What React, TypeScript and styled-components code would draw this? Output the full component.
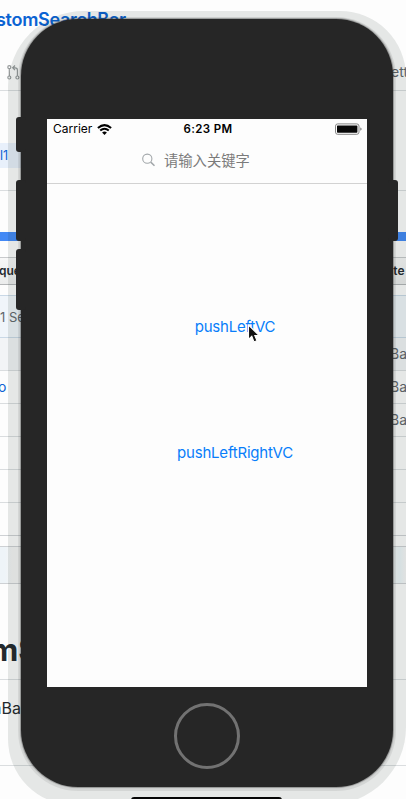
import React from 'react';
import styled, { createGlobalStyle } from 'styled-components';

const GlobalStyle = createGlobalStyle`
  * { box-sizing: border-box; }
  html, body { margin: 0; background: #fdfdfd; overflow: hidden; }
`;

const Stage = styled.main`
  position: relative;
  width: 406px;
  height: 799px;
  overflow: hidden;
  background: #fdfdfd;
  font-family: Inter, 'Noto Sans CJK SC', sans-serif;
`;

const Page = styled.div`
  display: flex;
  flex-direction: column;
`;

const Row = styled.div<{ $h: number; $line?: string; $bg?: string }>`
  display: flex;
  justify-content: space-between;
  flex: none;
  height: ${p => p.$h}px;
  background: ${p => p.$bg ?? 'transparent'};
  border-bottom: ${p => (p.$line ? `1px solid ${p.$line}` : 'none')};
`;

const Label = styled.span<{ $size: number; $color: string; $top: number; $x?: number; $weight?: number; $w?: number; $spacing?: number }>`
  flex: none;
  width: ${p => (p.$w ? `${p.$w}px` : 'auto')};
  margin-left: ${p => p.$x ?? 0}px;
  padding-top: ${p => p.$top}px;
  font-size: ${p => p.$size}px;
  line-height: 20px;
  font-weight: ${p => p.$weight ?? 400};
  letter-spacing: ${p => p.$spacing ?? 0}px;
  color: ${p => p.$color};
  white-space: nowrap;
`;

const PullIcon = styled.svg`
  margin: 23px 0 0 7px;
  width: 13px;
  height: 15px;
`;

const Shadow = styled.div`
  position: absolute;
  left: 8px;
  top: 11px;
  width: 398px;
  height: 794px;
  border-radius: 76px 66px 78px 66px;
  background: rgba(20, 36, 28, 0.1);
`;

const Phone = styled.section`
  position: absolute;
  left: 21px;
  top: 19px;
  width: 372px;
  height: 768px;
  display: flex;
  flex-direction: column;
  align-items: center;
  padding-top: 100px;
  border-radius: 57px;
  background: #262626;
  box-shadow: 0 0 1px 1px rgba(50, 50, 50, 0.4), 0 1px 0 3px rgba(0, 0, 0, 0.07);
`;

const SideKey = styled.div<{ $top: number; $h: number; $right?: boolean }>`
  position: absolute;
  ${p => (p.$right ? 'right' : 'left')}: -5px;
  top: ${p => p.$top}px;
  width: 10px;
  height: ${p => p.$h}px;
  border-radius: 3px;
  background: #262626;
`;

const Screen = styled.div`
  width: 320px;
  height: 568px;
  background: #fdfdfd;
`;

const StatusBar = styled.header`
  display: grid;
  grid-template-columns: 1fr auto 1fr;
  align-items: center;
  height: 20px;
  padding: 0 5px 0 6px;
  font-size: 12px;
  color: #000;
  line-height: 20px;
`;

const Carrier = styled.div`
  display: flex;
  align-items: center;
  gap: 5px;
`;

const Clock = styled.time`
  padding-left: 1px;
  font-size: 11.5px;
  font-weight: 600;
  letter-spacing: 0.35px;
`;

const Battery = styled.svg`
  justify-self: end;
  width: 27px;
  height: 12px;
`;

const SearchBar = styled.div`
  display: flex;
  height: 45px;
  border-bottom: 1px solid #d2d2d2;
  padding-left: 95px;
  gap: 9px;
  color: #7b7b7b;
  font-size: 14.3px;
  line-height: 20px;
  font-family: 'Noto Sans CJK SC', sans-serif;
`;

const SearchIcon = styled.svg`
  margin-top: 14px;
  width: 13px;
  height: 14px;
`;

const Placeholder = styled.span`
  padding-top: 11px;
`;

const Actions = styled.nav`
  display: flex;
  flex-direction: column;
  align-items: center;
  gap: 106px;
  padding: 133px 0 0 56px;
`;

const Push = styled.button`
  padding: 0;
  border: 0;
  background: none;
  color: #087dfa;
  font: 400 15px/20px Inter, sans-serif;
  letter-spacing: -0.2px;
`;

const HomeButton = styled.div`
  margin-top: 16px;
  width: 66px;
  height: 66px;
  border: 3px solid #727272;
  border-radius: 50%;
`;

const Pointer = styled.svg`
  position: absolute;
  left: 247px;
  top: 324px;
  width: 14px;
  height: 20px;
`;

const DockEdge = styled.div`
  position: absolute;
  left: 131px;
  top: 797px;
  width: 151px;
  height: 4px;
  border-radius: 3px 3px 0 0;
  background: #050505;
`;

const blue = '#0b63d3';
const grey = '#62676d';
const rule = '#dadddf';
const band = 'linear-gradient(90deg, #eef4f8 0 5px, #f5f5f5 12px 390px, #edf5f9 400px, #f8f8f8)';

export default function App() {
  return (
    <Stage>
      <GlobalStyle />
      <Page>
        <Row $h={42}>
          <Label $size={18} $weight={600} $color={blue} $top={10} $x={-4} $spacing={-0.3}>stomSearchBar</Label>
        </Row>
        <Row $h={49} $line={rule}>
          <PullIcon viewBox="0 0 13 15" fill="none" stroke="#969a9b" strokeWidth="1.2">
            <circle cx="2.3" cy="2.2" r="1.5" />
            <circle cx="2.3" cy="12.5" r="1.5" />
            <circle cx="10.4" cy="12.5" r="1.5" />
            <path d="M2.3 3.7V11M10.4 11V5Q10.4 2.8 8.2 2.8H6M8 .5 5.7 2.8 8 5.1" />
          </PullIcon>
          <Label $size={14} $color={grey} $top={20} $w={15}>ett</Label>
        </Row>
        <Row $h={52} />
        <Row $h={25} $bg="linear-gradient(90deg, #e8f0fb 21px, transparent 21px)">
          <Label $size={12.5} $color={blue} $top={3}>l1</Label>
        </Row>
        <Row $h={23} $line={rule} />
        <Row $h={41} />
        <Row $h={9} $bg="#4389f5" />
        <Row $h={17} $line="#c8cacc" />
        <Row $h={27} $line="#b4b6b8" $bg="linear-gradient(#f8f8f8, #ebecec)">
          <Label $size={12} $weight={600} $color="#24292e" $top={3} $x={-1}>que</Label>
          <Label $size={12} $weight={600} $color="#24292e" $top={3} $w={20}>nte</Label>
        </Row>
        <Row $h={11} $line="#c9d8e6" />
        <Row $h={42} $line="#c9d8e6" $bg="#f0f5fa">
          <Label $size={13} $color={grey} $top={11}>1 Se</Label>
        </Row>
        <Row $h={33} $line={rule} $bg="#f2f4f6">
          <Label $size={14} $color={grey} $top={6} $x={390}>Ba</Label>
        </Row>
        <Row $h={33} $line={rule}>
          <Label $size={14} $color={blue} $top={6} $x={-2}>o</Label>
          <Label $size={14} $color={grey} $top={6} $w={16}>Ba</Label>
        </Row>
        <Row $h={33} $line={rule}>
          <Label $size={14} $color={grey} $top={6} $x={390}>Ba</Label>
        </Row>
        <Row $h={33} $line={rule} />
        <Row $h={33} $line={rule} />
        <Row $h={33} $line="#ced1d4" />
        <Row $h={11} $line="#ced1d4" />
        <Row $h={37} $line="#ced1d4" $bg={band} />
        <Row $h={96} $line={rule}>
          <Label $size={31} $weight={700} $color="#24292e" $top={56} $x={-10}>mS</Label>
        </Row>
        <Row $h={86} $line={rule}>
          <Label $size={16} $color="#24292e" $top={18} $x={-8}>hBa</Label>
        </Row>
      </Page>

      <Shadow />
      <DockEdge />
      <Phone>
        <SideKey $top={98} $h={35} />
        <SideKey $top={161} $h={61} />
        <SideKey $top={230} $h={61} />
        <SideKey $top={161} $h={61} $right />
        <Screen>
          <StatusBar>
            <Carrier>
              Carrier
              <svg width="15" height="11" viewBox="0 0 15 11" fill="none" stroke="#000" strokeWidth="2">
                <path d="M.9 4.1Q7.5-1.9 14.1 4.1M3.2 6.6Q7.5 2.8 11.8 6.6" />
                <path d="M5.1 8.4Q7.5 6.4 9.9 8.4L7.5 10.9Z" fill="#000" stroke="none" />
              </svg>
            </Carrier>
            <Clock>6:23 PM</Clock>
            <Battery viewBox="0 0 27 12">
              <rect x=".5" y=".9" width="23.5" height="10.4" rx="2.2" fill="none" stroke="#858585" />
              <rect x="2" y="2.4" width="20.4" height="7.4" rx=".7" fill="#080808" />
              <path d="M25.3 4.5Q26.6 4.9 26.6 6.1T25.3 7.7Z" fill="#777" />
            </Battery>
          </StatusBar>
          <SearchBar>
            <SearchIcon viewBox="0 0 13 14" fill="none" stroke="#a2a7aa" strokeWidth="1.1">
              <circle cx="5.3" cy="5.7" r="4.6" />
              <path d="m8.7 9.1 3.8 3.6" strokeWidth="1.5" />
            </SearchIcon>
            <Placeholder>请输入关键字</Placeholder>
          </SearchBar>
          <Actions>
            <Push>pushLeftVC</Push>
            <Push>pushLeftRightVC</Push>
          </Actions>
        </Screen>
        <HomeButton />
      </Phone>
      <Pointer viewBox="0 0 14 20">
        <path d="M1.5 1v14.3l3.3-3 2.2 5.6 3-1.2-2.2-5.2h4.4Z" fill="#111" stroke="#fff" strokeWidth="1.1" />
      </Pointer>
    </Stage>
  );
}
